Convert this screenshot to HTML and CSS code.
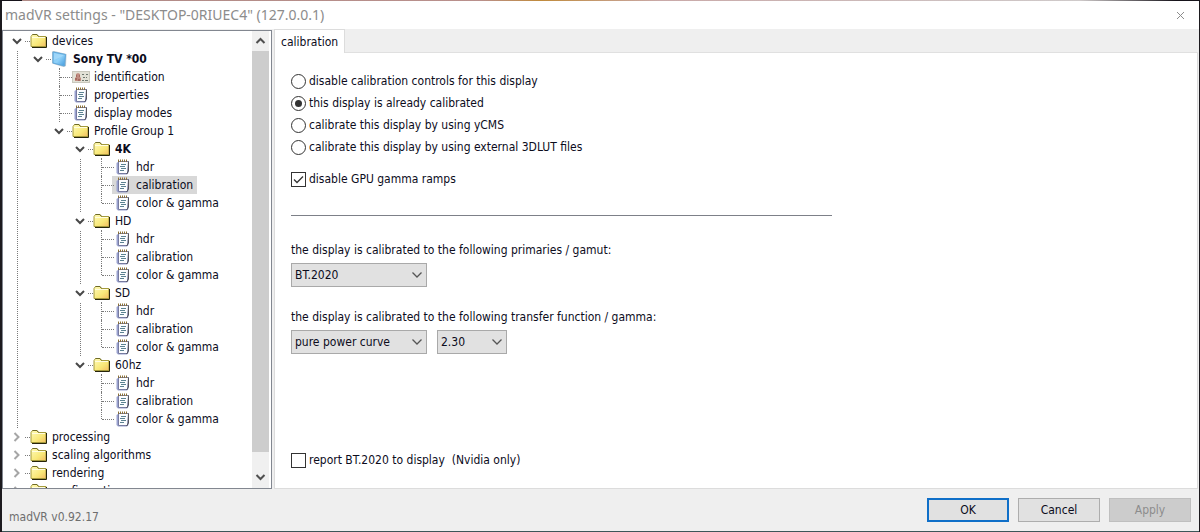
FILE: index.html
```html
<!DOCTYPE html>
<html lang="en">
<head>
<meta charset="utf-8">
<title>madVR settings</title>
<link rel="stylesheet" href="styles.css">
</head>
<body>
<svg class="defs" aria-hidden="true">
  <defs>
    <linearGradient id="g-folder" x1="0" y1="0" x2="1" y2="1"><stop offset="0" stop-color="#fffbb8"/><stop offset="0.6" stop-color="#f8e878"/><stop offset="1" stop-color="#f3bd62"/></linearGradient>
    <linearGradient id="g-screen" x1="0" y1="0" x2="1" y2="1"><stop offset="0" stop-color="#7cc4f2"/><stop offset="0.5" stop-color="#8fd0f8"/><stop offset="1" stop-color="#3d97dc"/></linearGradient>
  </defs>
  <symbol id="folder" viewBox="0 0 18 16">
    <path d="M1 13.500V3.500L2.500 1.500H7L8.500 3.500H16V13.500Z" fill="url(#g-folder)" stroke="#a49a3c"/>
    <path d="M2 4.500H15" stroke="#fffde0"/>
    <path d="M16.500 4V14.500H2" fill="none" stroke="#26240c"/>
    <path d="M2.500 1.500H7L8.500 3.500" fill="none" stroke="#6e6a26"/>
  </symbol>
  <symbol id="screen" viewBox="0 0 18 16">
    <path d="M1 0.500L3 0L15.500 3L15 15L12.500 16L1 12.500Z" fill="#b4c4d0"/>
    <path d="M2 1L14.500 3.500L13.500 15L2 12Z" fill="url(#g-screen)" stroke="#5fa8dc"/>
    <path d="M3 2L13 4.500L3 9Z" fill="#b8e2fb" opacity="0.5"/>
  </symbol>
  <symbol id="card" viewBox="0 0 18 16">
    <rect x="0.500" y="2.500" width="17" height="11" fill="#e2e1d6" stroke="#c9c8bd"/>
    <path d="M3 12V9L4 8V5L6 4L8 5V8L9 9V12Z" fill="#c08c80"/>
    <path d="M4 7H5M7 7H8M3 10H5M6 11H8" stroke="#8a4c44"/>
    <path d="M10 5.500H12M14 5.500H16M11 8.500H13M14 8.500H15M10 11.500H12M13 11.500H16" stroke="#6d766e"/>
  </symbol>
  <symbol id="note" viewBox="0 0 18 16">
    <path d="M4 3L2.500 4V14L4 15.500H13L14.500 14V3Z" fill="#9aa2d0"/>
    <path d="M4.500 2.500H14.500L13.500 14.500H4.500Z" fill="#fcfdff" stroke="#777ba0"/>
    <path d="M14.500 2.500V12L12.500 15" fill="none" stroke="#55555c"/>
    <path d="M4.500 0.500V3M6.500 0.500V3M8.500 0.500V3M10.500 0.500V3M12.500 0.500V3" stroke="#8b7138"/>
    <path d="M7 5.500H12M6 7.500H11M7 9.500H12M6 11.500H10" stroke="#5c8291"/>
  </symbol>
  <symbol id="open" viewBox="0 0 13 13"><path d="M2 4.500L6 8.500L10 4.500" fill="none" stroke="#484848" stroke-width="2"/></symbol>
  <symbol id="closed" viewBox="0 0 13 13"><path d="M3.500 2.500L7.500 6.500L3.500 10.500" fill="none" stroke="#a6a6a6" stroke-width="2"/></symbol>
  <symbol id="drop" viewBox="0 0 12 8"><path d="M1.500 1.500L6 6L10.500 1.500" fill="none" stroke="#555" stroke-width="1.300"/></symbol>
</svg>

<div class="window">
  <header class="titlebar">
    <h1 class="title">madVR settings - "DESKTOP-0RIUEC4" (127.0.0.1)</h1>
    <button class="close" type="button" aria-label="Close"><svg width="9" height="9" viewBox="0 0 9 9"><path d="M1 1L8 8M8 1L1 8" stroke="#8c8c8c" fill="none"/></svg></button>
  </header>

  <main class="main">
    <nav class="tree-box" aria-label="Settings">
      <ul class="tree">
        <li class="node"><div class="row"><svg class="chev"><use href="#open"/></svg><svg class="icon"><use href="#folder"/></svg><span>devices</span></div>
          <ul class="branch">
            <li class="node"><div class="row"><svg class="chev"><use href="#open"/></svg><svg class="icon"><use href="#screen"/></svg><b>Sony TV *00</b></div>
              <ul class="branch">
                <li class="node leaf"><div class="row"><svg class="icon"><use href="#card"/></svg><span>identification</span></div></li>
                <li class="node leaf"><div class="row"><svg class="icon"><use href="#note"/></svg><span>properties</span></div></li>
                <li class="node leaf"><div class="row"><svg class="icon"><use href="#note"/></svg><span>display modes</span></div></li>
                <li class="node"><div class="row"><svg class="chev"><use href="#open"/></svg><svg class="icon"><use href="#folder"/></svg><span>Profile Group 1</span></div>
                  <ul class="branch">
                    <li class="node"><div class="row"><svg class="chev"><use href="#open"/></svg><svg class="icon"><use href="#folder"/></svg><b>4K</b></div>
                      <ul class="branch">
                        <li class="node leaf"><div class="row"><svg class="icon"><use href="#note"/></svg><span>hdr</span></div></li>
                        <li class="node leaf selected"><div class="row"><svg class="icon"><use href="#note"/></svg><span>calibration</span></div></li>
                        <li class="node leaf"><div class="row"><svg class="icon"><use href="#note"/></svg><span>color &amp; gamma</span></div></li>
                      </ul>
                    </li>
                    <li class="node"><div class="row"><svg class="chev"><use href="#open"/></svg><svg class="icon"><use href="#folder"/></svg><span>HD</span></div>
                      <ul class="branch">
                        <li class="node leaf"><div class="row"><svg class="icon"><use href="#note"/></svg><span>hdr</span></div></li>
                        <li class="node leaf"><div class="row"><svg class="icon"><use href="#note"/></svg><span>calibration</span></div></li>
                        <li class="node leaf"><div class="row"><svg class="icon"><use href="#note"/></svg><span>color &amp; gamma</span></div></li>
                      </ul>
                    </li>
                    <li class="node"><div class="row"><svg class="chev"><use href="#open"/></svg><svg class="icon"><use href="#folder"/></svg><span>SD</span></div>
                      <ul class="branch">
                        <li class="node leaf"><div class="row"><svg class="icon"><use href="#note"/></svg><span>hdr</span></div></li>
                        <li class="node leaf"><div class="row"><svg class="icon"><use href="#note"/></svg><span>calibration</span></div></li>
                        <li class="node leaf"><div class="row"><svg class="icon"><use href="#note"/></svg><span>color &amp; gamma</span></div></li>
                      </ul>
                    </li>
                    <li class="node"><div class="row"><svg class="chev"><use href="#open"/></svg><svg class="icon"><use href="#folder"/></svg><span>60hz</span></div>
                      <ul class="branch">
                        <li class="node leaf"><div class="row"><svg class="icon"><use href="#note"/></svg><span>hdr</span></div></li>
                        <li class="node leaf"><div class="row"><svg class="icon"><use href="#note"/></svg><span>calibration</span></div></li>
                        <li class="node leaf"><div class="row"><svg class="icon"><use href="#note"/></svg><span>color &amp; gamma</span></div></li>
                      </ul>
                    </li>
                  </ul>
                </li>
              </ul>
            </li>
          </ul>
        </li>
        <li class="node"><div class="row"><svg class="chev"><use href="#closed"/></svg><svg class="icon"><use href="#folder"/></svg><span>processing</span></div></li>
        <li class="node"><div class="row"><svg class="chev"><use href="#closed"/></svg><svg class="icon"><use href="#folder"/></svg><span>scaling algorithms</span></div></li>
        <li class="node"><div class="row"><svg class="chev"><use href="#closed"/></svg><svg class="icon"><use href="#folder"/></svg><span>rendering</span></div></li>
        <li class="node"><div class="row"><svg class="chev"><use href="#closed"/></svg><svg class="icon"><use href="#folder"/></svg><span>configuration</span></div></li>
      </ul>
      <div class="scrollbar">
        <button class="scroll-btn" type="button" aria-label="Scroll up"><svg width="11" height="8" viewBox="0 0 11 8"><path d="M1.500 6L5.500 2L9.500 6" fill="none" stroke="#505050" stroke-width="2"/></svg></button>
        <div class="thumb"></div>
        <button class="scroll-btn scroll-down" type="button" aria-label="Scroll down"><svg width="11" height="8" viewBox="0 0 11 8"><path d="M1.500 2L5.500 6L9.500 2" fill="none" stroke="#505050" stroke-width="2"/></svg></button>
      </div>
    </nav>

    <section class="pages">
      <div class="tabs"><button class="tab" type="button">calibration</button></div>
      <form class="page">
        <label class="choice"><input class="radio" type="radio" name="mode">disable calibration controls for this display</label>
        <label class="choice"><input class="radio" type="radio" name="mode" checked>this display is already calibrated</label>
        <label class="choice"><input class="radio" type="radio" name="mode">calibrate this display by using yCMS</label>
        <label class="choice"><input class="radio" type="radio" name="mode">calibrate this display by using external 3DLUT files</label>
        <label class="choice ramps"><span class="check"><input class="box" type="checkbox" checked><svg class="tick" viewBox="0 0 15 15"><path d="M3 7.500L6 10.500L12 4.500" fill="none" stroke="#333" stroke-width="1.300"/></svg></span>disable GPU gamma ramps</label>
        <hr class="rule">
        <label class="caption" for="gamut">the display is calibrated to the following primaries / gamut:</label>
        <div class="selects">
          <span class="combo wide"><select class="select" id="gamut"><option>BT.2020</option></select><svg class="arrow"><use href="#drop"/></svg></span>
        </div>
        <label class="caption second" for="curve">the display is calibrated to the following transfer function / gamma:</label>
        <div class="selects">
          <span class="combo wide"><select class="select" id="curve"><option>pure power curve</option></select><svg class="arrow"><use href="#drop"/></svg></span>
          <span class="combo small"><select class="select" aria-label="gamma"><option>2.30</option></select><svg class="arrow"><use href="#drop"/></svg></span>
        </div>
        <label class="choice report"><span class="check"><input class="box" type="checkbox"></span>report BT.2020 to display&nbsp; (Nvidia only)</label>
      </form>
    </section>
  </main>

  <footer class="footer">
    <span class="version">madVR v0.92.17</span>
    <button class="btn primary" type="button">OK</button>
    <button class="btn" type="button">Cancel</button>
    <button class="btn" type="button" disabled>Apply</button>
  </footer>
</div>
</body>
</html>
```
FILE: styles.css
```css
* { box-sizing: border-box; }

body {
  margin: 0;
  height: 100vh;
  padding: 1px 1px 1px 2px;
  overflow: hidden;
  background: linear-gradient(90deg, #16131a 0, #16131a 22px, #b08a86 22px, #b9908c 40%, #c08a3c 45%, #c9a9a8 55%, #cfcaca 90%, #16131a 98%);
  font-family: "DejaVu Sans Condensed", "DejaVu Sans", sans-serif;
  font-size: 12px;
  color: #0c0c1c;
}

button, select, input { font: inherit; color: inherit; margin: 0; }
.defs { position: absolute; width: 0; height: 0; }

.window {
  height: 100%;
  display: flex;
  flex-direction: column;
  background: #efefef;
  box-shadow: -2px 0 #1c1a1e, 1px 0 #1c1a1e, 0 1px #3c5658;
}

.titlebar {
  flex: none;
  height: 28px;
  display: flex;
  align-items: center;
  justify-content: space-between;
  padding: 0 14px 0 3px;
  background: #fff;
}
.title {
  margin: 0;
  font: 400 14px/20px "Noto Sans", "Open Sans", sans-serif;
  color: #8c8c8c;
}
.close { display: flex; padding: 0; border: 0; background: none; }

.main { flex: 1; min-height: 0; display: flex; gap: 2px; padding-right: 1px; }

/* Settings tree */
.tree-box {
  flex: none;
  width: 270px;
  display: flex;
  margin-top: 1px;
  border: 1px solid #828790;
  background: #fff;
  overflow: hidden;
}
.tree { flex: 1; padding: 1px 0 0 7px; }
.tree, .branch { margin: 0; list-style: none; }
.branch { padding: 0 0 0 21px; }
.node { position: relative; }
.node::before {
  content: "";
  position: absolute;
  top: 0;
  bottom: 0;
  left: 7px;
  border-left: 1px dotted #7a7a7a;
}
.node:last-child::before { bottom: auto; height: 9px; }
.tree > .node:not(:first-child)::before { display: none; }
.tree > .node:first-child::before { top: 9px; }
.row {
  position: relative;
  display: flex;
  align-items: center;
  height: 18px;
  white-space: nowrap;
}
.row::before {
  content: "";
  position: absolute;
  left: 8px;
  width: 12px;
  top: 9px;
  border-top: 1px dotted #7a7a7a;
}
.chev { position: relative; width: 15px; height: 18px; padding: 2px 1px; background: #fff; margin-right: 5px; }
.icon { position: relative; width: 18px; height: 16px; margin-right: 4px; }
.leaf .icon { margin-left: 20px; }
.selected .row { width: max-content; padding-right: 4px; background: linear-gradient(#d8d8d8, #d8d8d8) 18px 0 no-repeat; }

.scrollbar { width: 17px; display: flex; flex-direction: column; background: #f0f0f0; margin-right: 2px; }
.scroll-btn { height: 20px; padding: 0; border: 0; background: #f0f0f0; display: grid; place-items: center; }
.thumb { flex: 1; background: #cdcdcd; }
.scroll-down { height: 36px; padding-top: 14px; }

/* Calibration page */
.pages { flex: 1; min-width: 0; display: flex; flex-direction: column; }
.tabs { height: 24px; display: flex; border-bottom: 1px solid #e0e0e0; }
.tab {
  height: 24px;
  padding: 0 6px;
  border: 1px solid #dcdcdc;
  border-bottom: 0;
  background: #fff;
}
.page {
  flex: 1;
  display: flex;
  flex-direction: column;
  align-items: flex-start;
  padding: 17px 16px 17px;
  border: 1px solid #dcdcdc;
  border-top: 0;
  background: #fff;
}
.choice { display: flex; align-items: center; gap: 3px; height: 22px; }
.radio, .box {
  appearance: none;
  flex: none;
  display: grid;
  place-items: center;
  width: 15px;
  height: 15px;
  border: 1px solid #333;
  background: #fff;
}
.radio { border-radius: 50%; }
.radio:checked::after { content: ""; width: 7px; height: 7px; border-radius: 50%; background: #333; }
.check { display: grid; }
.box, .tick { grid-area: 1 / 1; }
.tick { width: 15px; height: 15px; pointer-events: none; }
.ramps { margin-top: 10px; }
.report { margin-top: auto; }
.rule { width: 100%; max-width: 541px; margin: 25px 0; border: 0; border-top: 1px solid #7d8088; }
.caption { line-height: 18px; margin-bottom: 4px; }
.second { margin-top: 21px; }
.selects { display: flex; gap: 10px; }
.combo { display: grid; align-items: center; }
.wide { width: 136px; }
.small { width: 70px; }
.select {
  grid-area: 1 / 1;
  appearance: none;
  height: 24px;
  padding: 0 3px;
  border: 1px solid #a9a9a9;
  border-radius: 0;
  background: #e1e1e1;
}
.arrow { grid-area: 1 / 1; justify-self: end; width: 12px; height: 8px; margin-right: 4px; pointer-events: none; }

/* Button bar */
.footer { flex: none; height: 42px; display: flex; align-items: center; gap: 9px; padding: 0 8px 0 7px; }
.version { margin-right: auto; padding-top: 14px; color: #6e6e6e; }
.btn { width: 82px; height: 24px; padding: 0; border: 1px solid #adadad; background: #e1e1e1; }
.primary { border: 2px solid #0f6fc8; }
.btn:disabled { border-color: #bfbfbf; background: #ccc; color: #8c8c8c; }
```
